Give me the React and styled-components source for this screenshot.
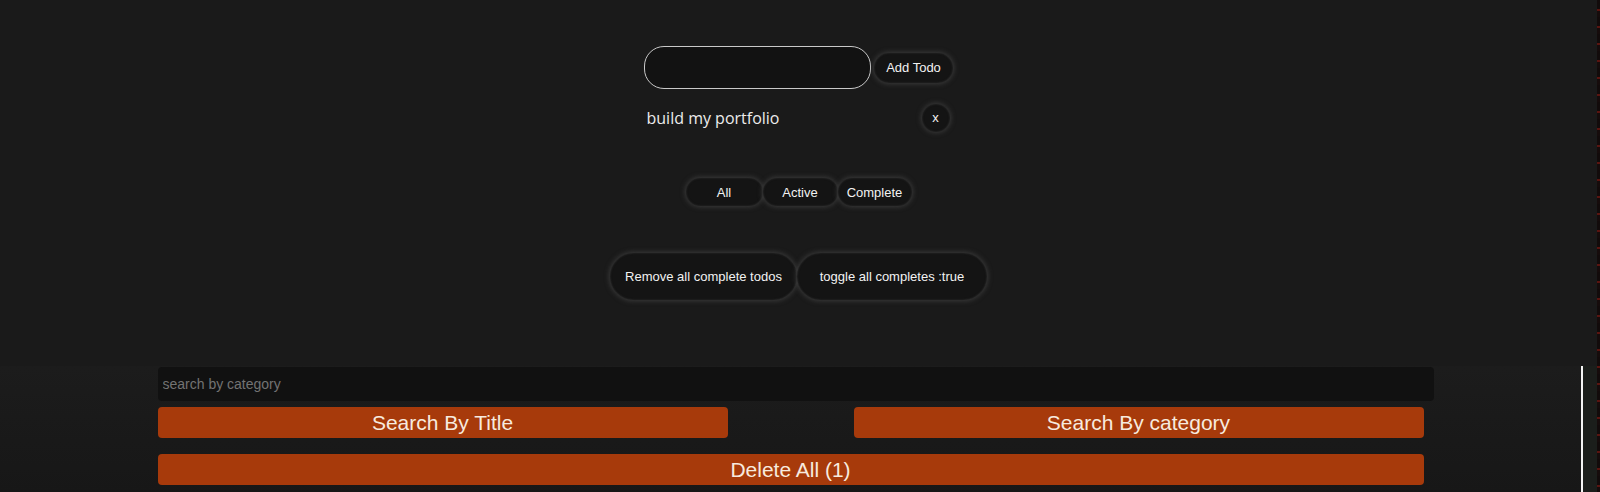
import styled, { createGlobalStyle } from "styled-components";

const GlobalStyle = createGlobalStyle`
  html, body {
    margin: 0;
    padding: 0;
    background: #1a1a1a;
  }
  * { box-sizing: border-box; }
`

const Page = styled.div`
  display: flex;
  width: 1600px;
  height: 492px;
  overflow: hidden;
  font-family: "Liberation Sans", Arial, sans-serif;
`

const Main = styled.div`
  flex: 1;
  display: flex;
  flex-direction: column;
`

const Edge = styled.div`
  width: 3px;
  background: repeating-linear-gradient(180deg, #120b0b 0 9px, #5a1410 9px 11px, #160c0c 11px 17px);
`

const TodoSection = styled.section`
  height: 366px;
  display: flex;
  flex-direction: column;
  align-items: center;
  padding-top: 46px;
  background: #1a1a1a;
`

const InputRow = styled.div`
  display: flex;
  align-items: center;
  gap: 3px;
`

const TodoInput = styled.input`
  width: 227px;
  height: 43px;
  border-radius: 20px;
  border: 1px solid #c9c9c9;
  background: #121212;
  color: #eee;
  padding: 0 14px;
  outline: none;
`

const PillButton = styled.button`
  height: ${(props) => props.tall ? '47px' : props.short ? '28px' : '30px'};
  width: ${(props) => props.w ? props.w + 'px' : 'auto'};
  padding: ${(props) => props.w ? '0' : '0 12px'};
  border: none;
  border-radius: 999px;
  background: #141414;
  color: #f2f2f2;
  font-family: "Liberation Sans", Arial, sans-serif;
  font-size: 13px;
  box-shadow: 0 0 5px 1px rgba(70, 70, 70, 0.75), inset 0 0 2px rgba(60, 60, 60, 0.8);
  cursor: pointer;
`

const RoundButton = styled.button`
  width: 28px;
  height: 28px;
  border-radius: 50%;
  border: none;
  background: #141414;
  color: #f2f2f2;
  font-family: "Liberation Sans", Arial, sans-serif;
  font-size: 13px;
  box-shadow: 0 0 5px 1px rgba(70, 70, 70, 0.75), inset 0 0 2px rgba(60, 60, 60, 0.8);
  padding: 0 0 2px;
`

const TodoItem = styled.div`
  width: 308px;
  height: 28px;
  margin-top: 15px;
  display: flex;
  align-items: center;
  justify-content: space-between;
  padding: 0 3px 0 2px;
`

const TodoText = styled.span`
  font-family: "Open Sans", "Noto Sans", sans-serif;
  font-size: 16px;
  color: #ececec;
`

const ButtonGroup = styled.div`
  display: flex;
  margin-top: ${(props) => props.mt}px;
  gap: ${(props) => props.gap || 0}px;
`

const SearchSection = styled.section`
  flex: 1;
  display: flex;
  background: linear-gradient(180deg, #1c1c1c, #171717);
`

const SearchColumn = styled.div`
  width: 1581px;
  display: flex;
  justify-content: center;
`

const SideStrip = styled.div`
  width: 16px;
  border-left: 2px solid #f4f4f4;
  background: #1b1e1b;
`

const SearchBox = styled.div`
  width: 1266px;
  padding-top: 1px;
`

const SearchInput = styled.input`
  box-sizing: content-box;
  width: 100%;
  height: 34px;
  padding: 0 5px;
  margin: 0;
  border: none;
  border-radius: 4px;
  background: #111111;
  color: #ddd;
  font-family: "Liberation Sans", Arial, sans-serif;
  font-size: 14px;
  outline: none;
  display: block;
  &::placeholder { color: #737373; }
`

const SearchRow = styled.div`
  display: flex;
  justify-content: space-between;
  margin-top: 6px;
`

const OrangeButton = styled.button`
  width: ${(props) => props.full ? '100%' : '570px'};
  height: 31px;
  margin-top: ${(props) => props.mt || 0}px;
  display: block;
  border: none;
  border-radius: 4px;
  background: #a73a0b;
  color: #f7eadf;
  font-family: "Liberation Sans", Arial, sans-serif;
  font-size: 21px;
  line-height: 31px;
  padding: 0;
  cursor: pointer;
`

export default function App() {
  return (
    <>
      <GlobalStyle />
      <Page>
        <Main>
          <TodoSection>
            <InputRow>
              <TodoInput type="text" />
              <PillButton>Add Todo</PillButton>
            </InputRow>
            <TodoItem>
              <TodoText>build my portfolio</TodoText>
              <RoundButton>x</RoundButton>
            </TodoItem>
            <ButtonGroup mt={46}>
              <PillButton short w={77}>All</PillButton>
              <PillButton short w={75}>Active</PillButton>
              <PillButton short w={74}>Complete</PillButton>
            </ButtonGroup>
            <ButtonGroup mt={47}>
              <PillButton tall w={187}>Remove all complete todos</PillButton>
              <PillButton tall w={190}>toggle all completes :true</PillButton>
            </ButtonGroup>
          </TodoSection>
          <SearchSection>
            <SearchColumn>
              <SearchBox>
                <SearchInput placeholder="search by category" />
                <SearchRow>
                  <OrangeButton>Search By Title</OrangeButton>
                  <OrangeButton>Search By category</OrangeButton>
                </SearchRow>
                <OrangeButton full mt={16}>Delete All (1)</OrangeButton>
              </SearchBox>
            </SearchColumn>
            <SideStrip />
          </SearchSection>
        </Main>
        <Edge />
      </Page>
    </>
  )
}
